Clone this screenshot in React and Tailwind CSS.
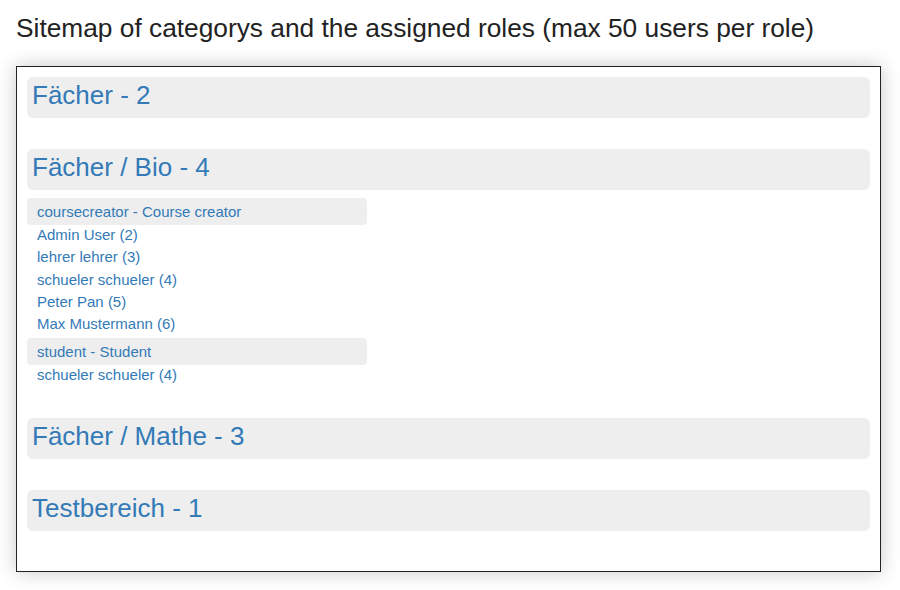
const categories = [
  { name: 'Fächer - 2', roles: [] },
  {
    name: 'Fächer / Bio - 4',
    roles: [
      {
        name: 'coursecreator - Course creator',
        users: ['Admin User (2)', 'lehrer lehrer (3)', 'schueler schueler (4)', 'Peter Pan (5)', 'Max Mustermann (6)'],
      },
      { name: 'student - Student', users: ['schueler schueler (4)'] },
    ],
  },
  { name: 'Fächer / Mathe - 3', roles: [] },
  { name: 'Testbereich - 1', roles: [] },
];

export default function App() {
  return (
    <div className="w-[900px] h-[590px] bg-white overflow-hidden font-['Liberation_Sans',Arial,sans-serif]">
      <h3 className="px-4 pt-[13px] h-[54px] text-[26.3px] leading-[30px] text-[#222]">
        Sitemap of categorys and the assigned roles (max 50 users per role)
      </h3>
      <div className="ml-4 mt-[12px] w-[865px] h-[506px] border border-[#222] bg-white p-[10px] shadow-[0_0_18px_rgba(0,0,0,0.22)]">
        {categories.map((cat) => (
          <div key={cat.name} className="mb-[31px]">
            <div className="h-[41px] rounded-[6px] bg-[#eee] pl-[5px] text-[26px] leading-[36px] text-[#337ab7]">
              {cat.name}
            </div>
            {cat.roles.length > 0 && (
              <div className="mt-[8px] mb-[-1px] w-[340px] text-[15px] text-[#337ab7]">
                {cat.roles.map((role, i) => (
                  <div key={role.name} className={i > 0 ? 'mt-[2px]' : ''}>
                    <div className="h-[27px] rounded-[4px] bg-[#eee] pl-[10px] leading-[28px]">{role.name}</div>
                    {role.users.map((u) => (
                      <div key={u} className="pl-[10px] h-[22.25px] leading-[20px]">
                        {u}
                      </div>
                    ))}
                  </div>
                ))}
              </div>
            )}
          </div>
        ))}
      </div>
    </div>
  );
}
